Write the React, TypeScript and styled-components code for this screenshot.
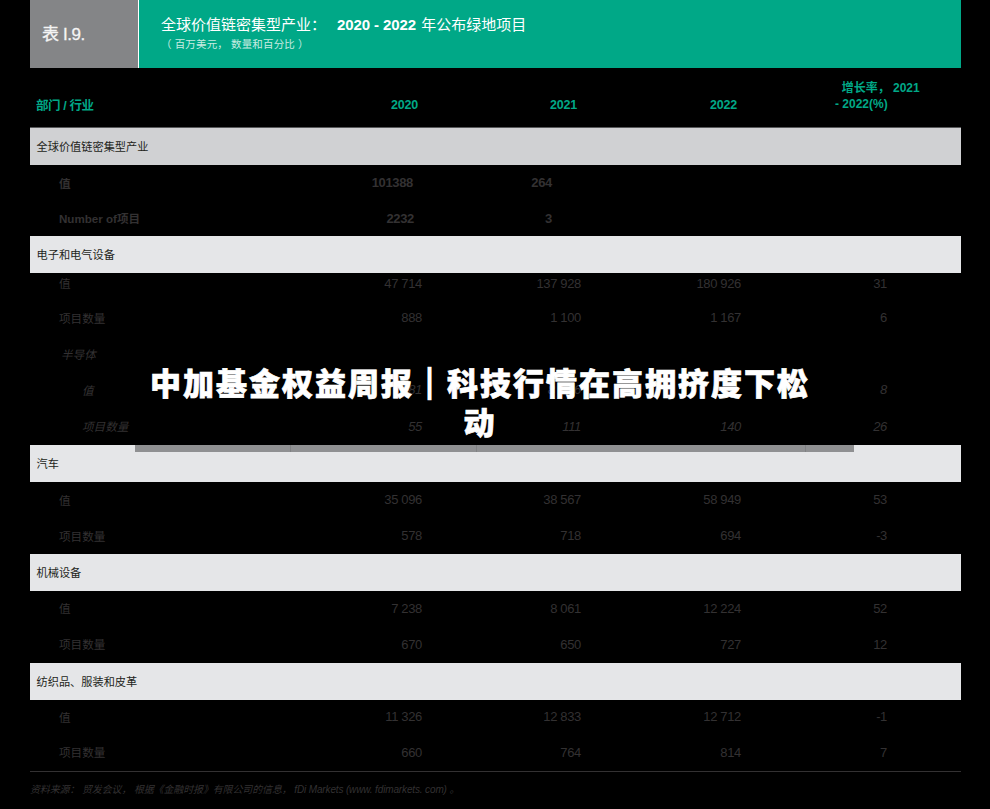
import React from 'react';
import styled, { createGlobalStyle } from 'styled-components';

const GlobalStyle = createGlobalStyle`
  html, body {
    margin: 0;
    background: #000;
    font-family: 'Liberation Sans', 'Noto Sans CJK SC', sans-serif;
  }
`;

const Page = styled.div`
  position: relative;
  width: 990px;
  height: 809px;
  overflow: hidden;
  background: #000;
`;

const Sheet = styled.div`
  width: 931px;
  margin-left: 30px;
`;

const Banner = styled.header`
  display: flex;
  height: 68px;
`;

const BannerTag = styled.div`
  display: flex;
  align-items: center;
  box-sizing: border-box;
  width: 109px;
  padding: 0 0 3px 12px;
  background: #848587;
  color: #f4f4f4;
  font-size: 17px;
  letter-spacing: -0.4px;
  -webkit-text-stroke: 0.3px #f4f4f4;
  border-right: 1px solid #fff;
`;

const BannerBody = styled.div`
  flex: 1;
  display: flex;
  flex-direction: column;
  padding: 14px 0 0 22px;
  background: #00a887;
  color: #fff;
`;

const BannerTitle = styled.div`
  font-size: 15px;
  line-height: 21px;

  b {
    margin: 0 1px 0 11px;
    font-size: 15px;
    font-weight: 700;
    letter-spacing: -0.1px;
  }
`;

const BannerNote = styled.div`
  margin-top: 2px;
  font-size: 10.5px;
  line-height: 14px;
  letter-spacing: 0.15px;
  color: #c9ece2;
`;

const Grid = styled.div<{ $h: number; $pb?: number }>`
  display: grid;
  grid-template-columns: 230px 162px 159px 160px 146px 74px;
  align-items: center;
  box-sizing: border-box;
  height: ${(p) => p.$h}px;
  padding-bottom: ${(p) => p.$pb ?? 1}px;
`;

const HeadRow = styled(Grid)`
  border-bottom: 1px solid #58595b;
  color: #00a887;
  font-size: 12.5px;
  font-weight: 700;
  letter-spacing: -0.2px;
`;

const HeadLabel = styled.div`
  padding: 14px 0 0 6px;
  letter-spacing: -0.4px;
`;

const HeadYear = styled.div`
  padding: 15px 4px 0 0;
  text-align: right;
`;

const HeadGrowth = styled.div`
  grid-column: span 2;
  padding: 0 0 3px 94px;
  font-size: 12px;
  line-height: 16px;
  letter-spacing: 0;
  white-space: pre;
`;

const Section = styled.div<{ $dark?: boolean }>`
  display: flex;
  align-items: center;
  box-sizing: border-box;
  height: 37px;
  padding: 0 0 2px 6.5px;
  background: ${(p) => (p.$dark ? '#d0d1d3' : '#e5e6e8')};
  color: #231f20;
  font-size: 11.2px;
`;

const Label = styled.div<{ $indent: number; $bold?: boolean; $italic?: boolean }>`
  padding-left: ${(p) => p.$indent}px;
  color: #333132;
  font-size: 11.6px;
  font-weight: ${(p) => (p.$bold ? 700 : 400)};
  font-style: ${(p) => (p.$italic ? 'italic' : 'normal')};
  white-space: nowrap;
`;

const Num = styled.div<{ $bold?: boolean; $italic?: boolean; $inset?: number }>`
  padding-right: ${(p) => p.$inset ?? 0}px;
  text-align: right;
  color: #333132;
  font-size: 13px;
  font-weight: ${(p) => (p.$bold ? 700 : 400)};
  font-style: ${(p) => (p.$italic ? 'italic' : 'normal')};
  letter-spacing: -0.35px;
  white-space: pre;
`;

const Source = styled.footer`
  padding-top: 9px;
  border-top: 1px solid #333132;
  color: #333132;
  font-size: 10px;
  font-style: italic;
  letter-spacing: -0.14px;
`;

const TitleOverlay = styled.div`
  position: absolute;
  left: 135px;
  top: 362px;
  width: 719px;
  height: 90px;
  display: flex;
  flex-direction: column;
  justify-content: flex-end;
`;

const Headline = styled.h1`
  position: absolute;
  left: 0;
  right: 29px;
  top: 0;
  margin: 0;
  color: #fff;
  font-family: 'Noto Sans CJK SC', sans-serif;
  font-size: 31px;
  font-weight: 900;
  line-height: 39px;
  letter-spacing: 2px;
  text-align: center;
  -webkit-text-stroke: 0.7px #fff;

  span {
    -webkit-text-stroke: 2.4px #fff;
  }
`;

const Ghost = styled.div`
  display: grid;
  grid-template-columns: 155px 186px 329px 49px;
  height: 7px;
  background: #8f9092;
`;

const GhostCell = styled.div`
  & + & {
    border-left: 1px solid #808183;
  }
`;

type Row = {
  label: string;
  values: string[];
  h: number;
  pb?: number;
  indent?: number;
  bold?: boolean;
  italic?: boolean;
  inset?: number[];
};

type Group = { title: string; dark?: boolean; rows: Row[] };

const groups: Group[] = [
  {
    title: '全球价值链密集型产业',
    dark: true,
    rows: [
      { label: '值', values: ['101388', '264'], h: 36, bold: true, inset: [9, 29] },
      { label: 'Number of项目', values: ['2232', '3'], h: 35, bold: true, inset: [8, 29] },
    ],
  },
  {
    title: '电子和电气设备',
    rows: [
      { label: '值', values: ['47 714', '137 928', '180 926', '31'], h: 27, pb: 7 },
      { label: '项目数量', values: ['888', '1 100', '1 167', '6'], h: 36 },
      { label: '半导体', values: [], h: 36, indent: 31, italic: true },
      { label: '值', values: ['81', '8      6', '', '8'], h: 36, indent: 52, italic: true },
      { label: '项目数量', values: ['55', '111', '140', '26'], h: 37, indent: 52, italic: true },
    ],
  },
  {
    title: '汽车',
    rows: [
      { label: '值', values: ['35 096', '38 567', '58 949', '53'], h: 36 },
      { label: '项目数量', values: ['578', '718', '694', '-3'], h: 36 },
    ],
  },
  {
    title: '机械设备',
    rows: [
      { label: '值', values: ['7 238', '8 061', '12 224', '52'], h: 35 },
      { label: '项目数量', values: ['670', '650', '727', '12'], h: 37 },
    ],
  },
  {
    title: '纺织品、服装和皮革',
    rows: [
      { label: '值', values: ['11 326', '12 833', '12 712', '-1'], h: 34 },
      { label: '项目数量', values: ['660', '764', '814', '7'], h: 37 },
    ],
  },
];

const App: React.FC = () => (
  <Page>
    <GlobalStyle />
    <Sheet>
      <Banner>
        <BannerTag>表 I.9.</BannerTag>
        <BannerBody>
          <BannerTitle>
            全球价值链密集型产业：<b>2020 - 2022</b> 年公布绿地项目
          </BannerTitle>
          <BannerNote>（ 百万美元， 数量和百分比 ）</BannerNote>
        </BannerBody>
      </Banner>
      <HeadRow $h={60} $pb={0}>
        <HeadLabel>部门 / 行业</HeadLabel>
        <HeadYear>2020</HeadYear>
        <HeadYear>2021</HeadYear>
        <HeadYear>2022</HeadYear>
        <HeadGrowth>{'  增长率， 2021\n- 2022(%)'}</HeadGrowth>
      </HeadRow>
      {groups.map((group) => (
        <div key={group.title}>
          <Section $dark={group.dark}>{group.title}</Section>
          {group.rows.map((row) => (
            <Grid key={row.label + row.h} $h={row.h} $pb={row.pb}>
              <Label $indent={row.indent ?? 29} $bold={row.bold} $italic={row.italic}>
                {row.label}
              </Label>
              {row.values.map((value, i) => (
                <Num key={i} $bold={row.bold} $italic={row.italic} $inset={row.inset?.[i]}>
                  {value}
                </Num>
              ))}
            </Grid>
          ))}
        </div>
      ))}
      <Source>
        资料来源： 贸发会议， 根据《金融时报》有限公司的信息， fDi Markets (www. fdimarkets. com) 。
      </Source>
    </Sheet>
    <TitleOverlay>
      <Headline>
        中加基金权益周报<span>｜</span>科技行情在高拥挤度下松动
      </Headline>
      <Ghost>
        <GhostCell />
        <GhostCell />
        <GhostCell />
        <GhostCell />
      </Ghost>
    </TitleOverlay>
  </Page>
);

export default App;
